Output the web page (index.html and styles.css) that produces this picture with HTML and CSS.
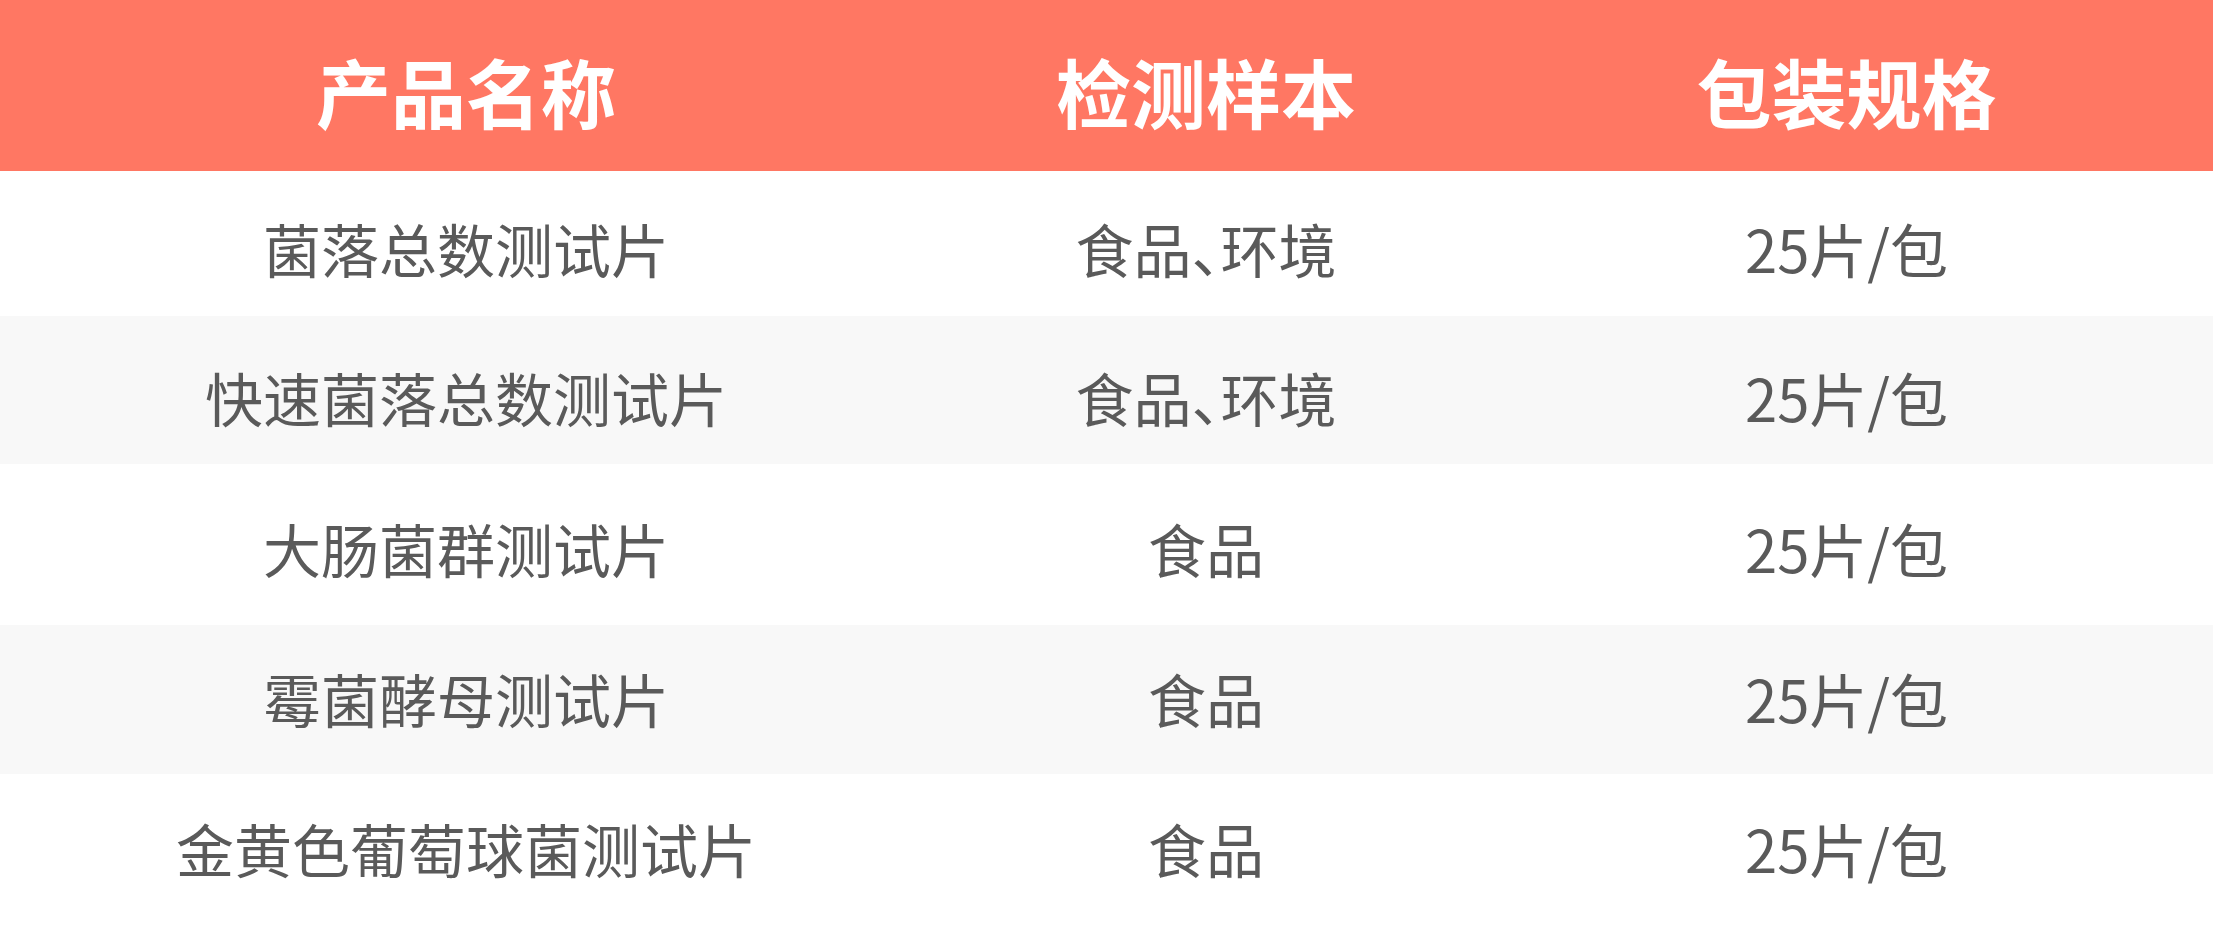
FILE: index.html
```html
<!DOCTYPE html>
<html lang="zh-CN">
<head>
<meta charset="utf-8">
<title>产品规格表</title>
<link rel="stylesheet" href="styles.css">
</head>
<body>
<div class="table">
  <div class="row head">
    <div class="cell">产品名称</div>
    <div class="cell">检测样本</div>
    <div class="cell">包装规格</div>
  </div>
  <div class="row r1">
    <div class="cell">菌落总数测试片</div>
    <div class="cell">食品<span class="punct">、</span>环境</div>
    <div class="cell">25片/包</div>
  </div>
  <div class="row r2 alt">
    <div class="cell">快速菌落总数测试片</div>
    <div class="cell">食品<span class="punct">、</span>环境</div>
    <div class="cell">25片/包</div>
  </div>
  <div class="row r3">
    <div class="cell">大肠菌群测试片</div>
    <div class="cell">食品</div>
    <div class="cell">25片/包</div>
  </div>
  <div class="row r4 alt">
    <div class="cell">霉菌酵母测试片</div>
    <div class="cell">食品</div>
    <div class="cell">25片/包</div>
  </div>
  <div class="row r5">
    <div class="cell">金黄色葡萄球菌测试片</div>
    <div class="cell">食品</div>
    <div class="cell">25片/包</div>
  </div>
</div>
</body>
</html>
```

FILE: styles.css
```css
* { box-sizing: border-box; }
html, body {
  margin: 0;
  padding: 0;
  background: #ffffff;
}
body {
  font-family: "Noto Sans CJK SC", "Noto Sans", sans-serif;
  width: 2213px;
  height: 938px;
  overflow: hidden;
}
.table {
  display: flex;
  flex-direction: column;
  width: 2213px;
}
.row {
  display: grid;
  grid-template-columns: 932px 548px 733px;
  align-items: center;
  background: #ffffff;
  color: #5a5a5a;
  font-size: 58px;
  line-height: 1;
}
.row.alt { background: #f8f8f8; }
.cell {
  text-align: center;
  white-space: nowrap;
}
.punct {
  font-feature-settings: "halt" 1;
}
.head {
  height: 171px;
  padding-top: 9px;
  background: #ff7763;
  color: #ffffff;
  font-size: 75px;
  font-weight: 700;
}
.r1 { height: 145px; padding-top: 9px; }
.r2 { height: 148px; padding-top: 14px; }
.r3 { height: 161px; padding-top: 7px; }
.r4 { height: 149px; padding-bottom: 3px; }
.r5 { height: 165px; padding-bottom: 18px; }
```
